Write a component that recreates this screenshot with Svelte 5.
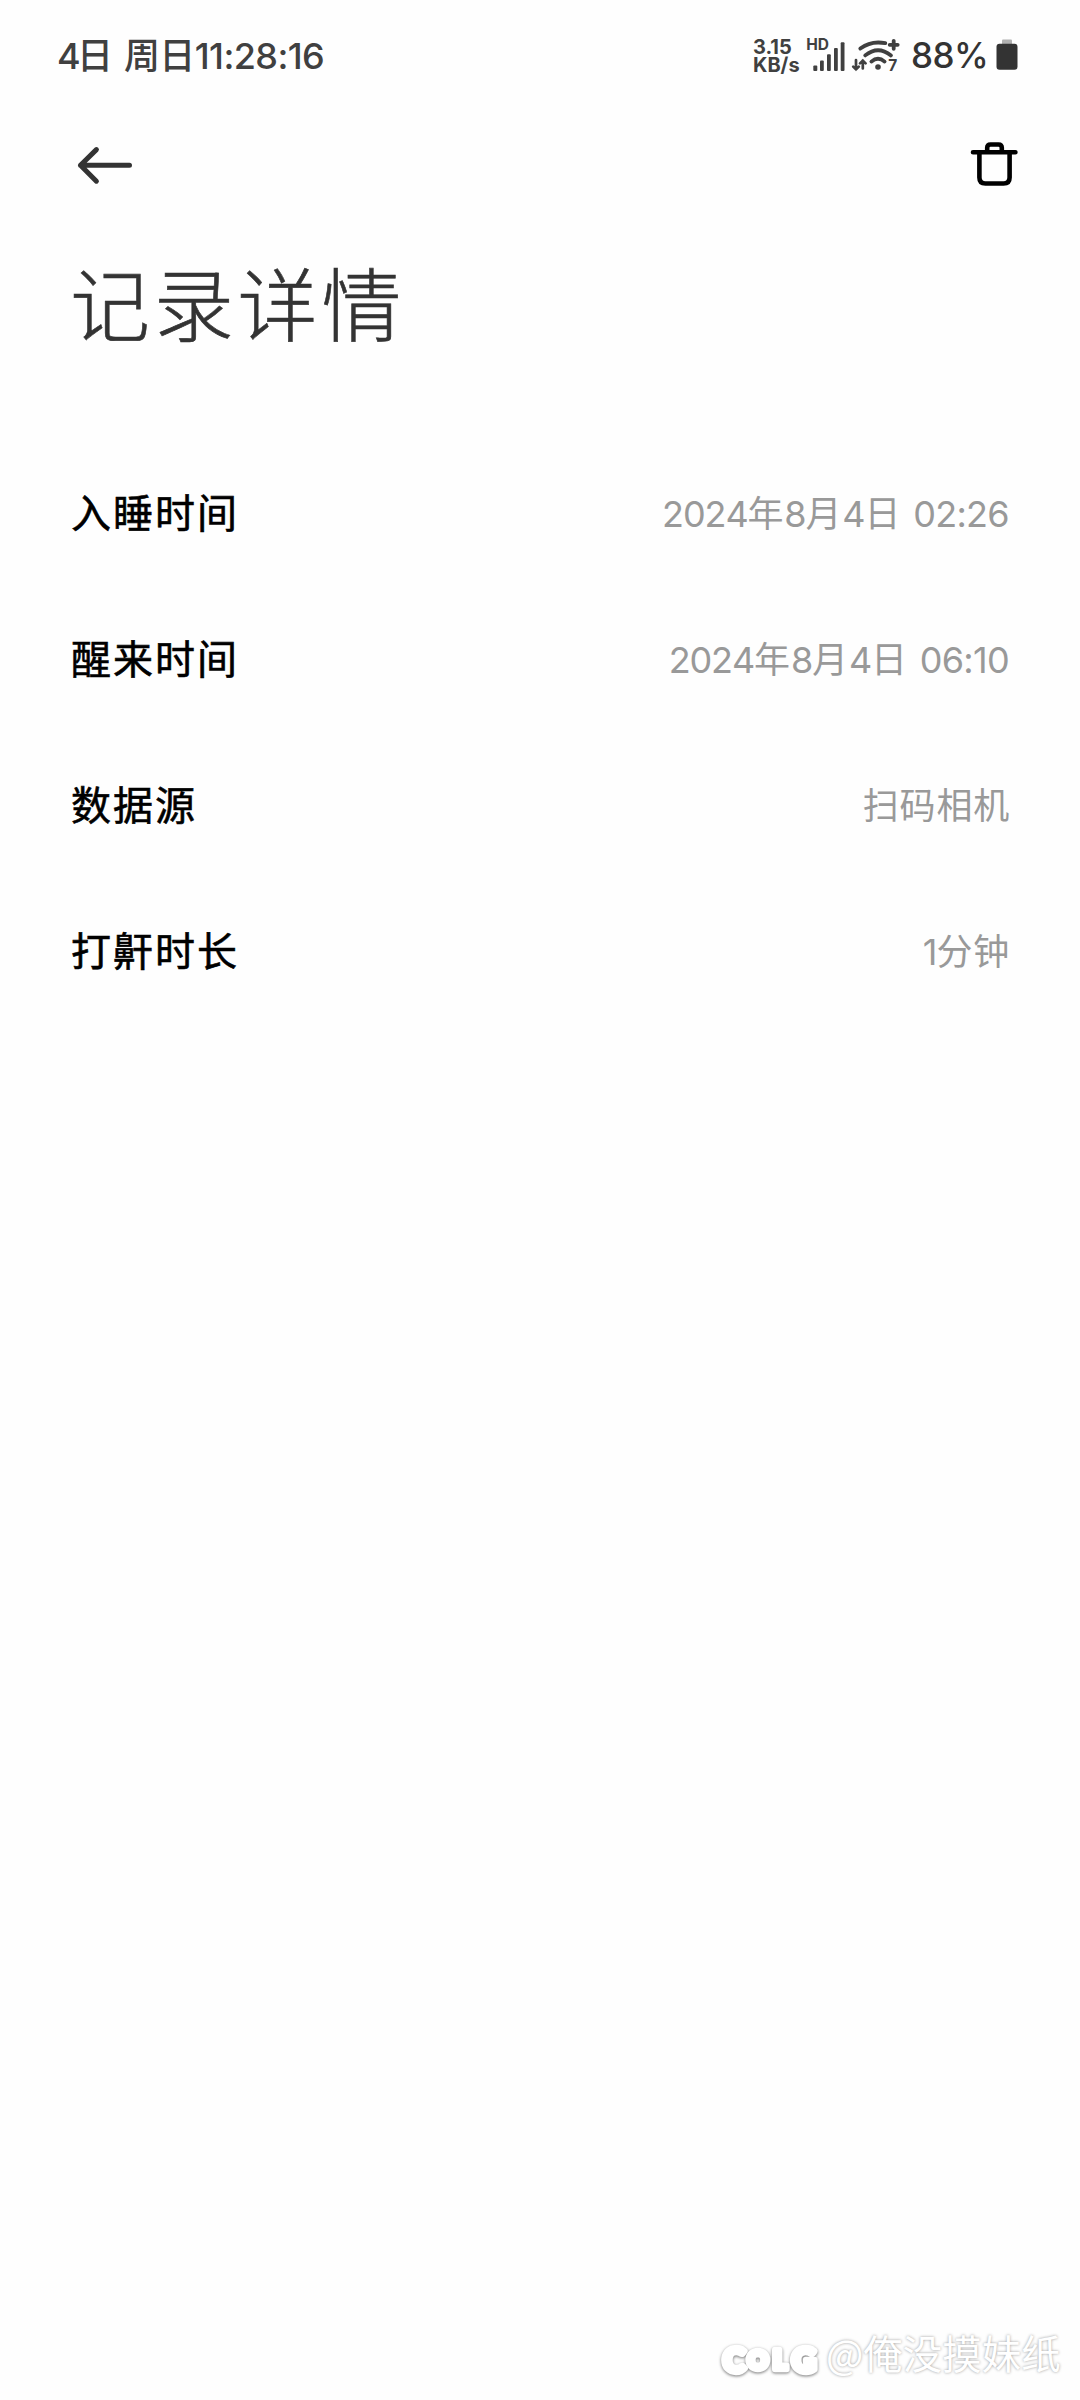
<script lang="ts">
	interface RecordRow {
		label: string
		value: string
	}

	let rows: RecordRow[] = [
		{ label: "入睡时间", value: "2024年8月4日 02:26" },
		{ label: "醒来时间", value: "2024年8月4日 06:10" },
		{ label: "数据源", value: "扫码相机" },
		{ label: "打鼾时长", value: "1分钟" }
	]

	// digits are set in a different face than the characters around them
	function splitDigits(value: string) {
		return value.match(/[\d:]+|[^\d:]+/g) ?? []
	}
</script>

<div class="screen">
	<div class="status">
		<div class="clock">
			<span class="time">4</span><span class="day">日 周日</span><span class="time">11:28:16</span>
		</div>
		<div class="indicators">
			<div class="speed">
				<span>3.15</span>
				<span>KB/s</span>
			</div>
			<svg class="radio" viewBox="805 30 96 50" width="96" height="50">
				<text x="806.2" y="50.2">HD</text>
				<g class="bars">
					<rect x="813.3" y="65.5" width="4" height="5.4" rx="1" />
					<rect x="820" y="60.4" width="3.8" height="10.5" rx="1" />
					<rect x="827" y="54.2" width="3.8" height="16.7" rx="1" />
					<rect x="834" y="48.1" width="3.8" height="22.8" rx="1" />
					<rect x="840.7" y="42.2" width="3.8" height="28.7" rx="1" />
				</g>
				<g class="wifi">
					<path d="M860.3 48.6Q871 40.4 885.3 43.2" />
					<path d="M865.2 55.4Q878 45 891 55.4" />
					<path d="M871.4 61.6Q878 55.8 884.6 61.6" />
					<path d="M893.7 40.8v8M889.7 44.8h8" />
					<path class="thin" d="M856 60v9.2M853.2 66.6l2.8 2.8 2.8-2.8M862.8 68.4v-7.8M860 63.4l2.8-2.8 2.8 2.8" />
					<circle cx="878" cy="67" r="2.8" />
				</g>
				<text x="888.3" y="71.2">7</text>
			</svg>
			<span class="percent">88%</span>
			<svg class="battery" viewBox="0 0 22 32" width="22" height="32">
				<path class="cap" d="M6 5V1.6Q6 .6 7 .6h8q1 0 1 1V5z" />
				<rect x=".5" y="4.8" width="21" height="26" rx="3" />
			</svg>
		</div>
	</div>

	<div class="toolbar">
		<button aria-label="返回">
			<svg viewBox="0 0 60 48" width="60" height="48">
				<path class="arrow" d="M55.5 24.3H6.5M22.4 8.6 6.5 24.3l15.9 15.9" />
			</svg>
		</button>
		<button aria-label="删除">
			<svg viewBox="0 0 48 48" width="48" height="48">
				<path class="trash" d="M3 11.3h42.4M9.4 11.3v25.2q0 6 6 6h18.2q6 0 6-6V11.3M17.2 11V6.8q0-3.3 3.3-3.3h8q3.3 0 3.3 3.3V11" />
			</svg>
		</button>
	</div>

	<h1>记录详情</h1>

	<ul>
		{#each rows as row}
			<li>
				<span class="label">{row.label}</span>
				<span class="value">
					{#each splitDigits(row.value) as part}<span class:digits={/\d/.test(part)}>{part}</span>{/each}
				</span>
			</li>
		{/each}
	</ul>

	<div class="watermark">
		<svg class="logo" viewBox="0 0 106 60" width="106" height="60">
			<text x="14" y="49.5" font-size="33">C</text>
			<text x="38" y="47" font-size="25">O</text>
			<text x="60" y="47" font-size="26">L</text>
			<text x="84" y="49.5" font-size="33">G</text>
		</svg>
		<span>@俺没摸妹纸</span>
	</div>
</div>

<style>
	:global(body) {
		background: #fefefe;
	}

	.screen {
		display: flex;
		flex-direction: column;
		box-sizing: border-box;
		width: 1080px;
		height: 2400px;
		overflow: hidden;
		background: #fefefe;
		color: #333;
		font-family: "Noto Sans CJK SC", sans-serif;
	}

	.status {
		display: flex;
		justify-content: space-between;
		height: 110px;
		padding: 0 62px 0 57px;
		align-items: center;
	}

	.clock {
		display: flex;
		align-items: baseline;
		font-size: 36px;
		font-weight: 500;
		line-height: 50px;
		color: #404040;
		white-space: pre;
		margin-top: -2px;
	}

	.day {
		margin-left: -3px;
		word-spacing: 4px;
		letter-spacing: -0.6px;
	}

	.time {
		font-family: Inter, sans-serif;
		letter-spacing: -0.6px;
	}

	.indicators {
		display: flex;
		align-items: center;
	}

	.speed {
		display: flex;
		flex-direction: column;
		width: 52px;
		margin-top: 2px;
		font: 700 20px/18px Inter, sans-serif;
		color: #404040;
	}

	.radio {
		overflow: visible;
		fill: #404040;
		font: 700 15.5px Inter, sans-serif;
	}

	.wifi path {
		fill: none;
		stroke: #404040;
		stroke-width: 3.8;
		stroke-linecap: round;
	}

	.wifi .thin {
		stroke-width: 2.7;
	}

	.percent {
		width: 84px;
		margin-right: 11px;
		padding-left: 10px;
		box-sizing: border-box;
		font: 500 35px/50px Inter, sans-serif;
		letter-spacing: -0.5px;
		white-space: nowrap;
	}

	.battery {
		fill: #333;
	}

	.cap {
		fill: #b0b0b0;
	}

	.toolbar {
		display: flex;
		justify-content: space-between;
		align-items: center;
		height: 110px;
		padding: 0 62px 0 74px;
	}

	button {
		display: flex;
		padding: 0;
		border: 0;
		background: none;
	}

	.arrow,
	.trash {
		fill: none;
		stroke: #333;
		stroke-width: 5;
		stroke-linecap: round;
		stroke-linejoin: round;
	}

	.trash {
		stroke: #000;
		stroke-width: 4.6;
	}

	h1 {
		margin: 0;
		padding: 20px 0 0 70px;
		font-size: 80px;
		font-weight: 300;
		line-height: 120px;
		letter-spacing: 3.8px;
		-webkit-text-stroke: 0.6px #333;
	}

	ul {
		margin: 78px 0 0;
		padding: 0 70px 0 71px;
		list-style: none;
	}

	li {
		display: flex;
		justify-content: space-between;
		align-items: center;
		height: 146px;
	}

	.label {
		color: #000;
		font-size: 40px;
		font-weight: 400;
		letter-spacing: 2px;
		-webkit-text-stroke: 0.6px #000;
	}

	.value {
		display: flex;
		align-items: baseline;
		color: #999;
		font-size: 36px;
		letter-spacing: 0.8px;
		word-spacing: 3px;
		white-space: pre;
	}

	.digits {
		font-family: Inter, sans-serif;
		font-kerning: none;
		letter-spacing: -1.1px;
	}

	.digits:last-child {
		padding-right: 1px;
		letter-spacing: -0.7px;
	}

	.watermark {
		display: flex;
		align-items: center;
		justify-content: flex-end;
		margin-top: auto;
		padding: 0 20px 18px 0;
		color: #fff;
		font-size: 39.5px;
		line-height: 60px;
		text-shadow: 0 0 3px #999;
	}

	.watermark span {
		width: 234px;
		white-space: nowrap;
	}

	.logo {
		overflow: visible;
		fill: #fff;
		stroke: #fff;
		stroke-width: 6.5;
		stroke-linejoin: round;
		font-family: Lato, sans-serif;
		font-weight: 900;
		text-anchor: middle;
		text-shadow: none;
		filter: drop-shadow(0 1px 1.5px #777);
	}
</style>
